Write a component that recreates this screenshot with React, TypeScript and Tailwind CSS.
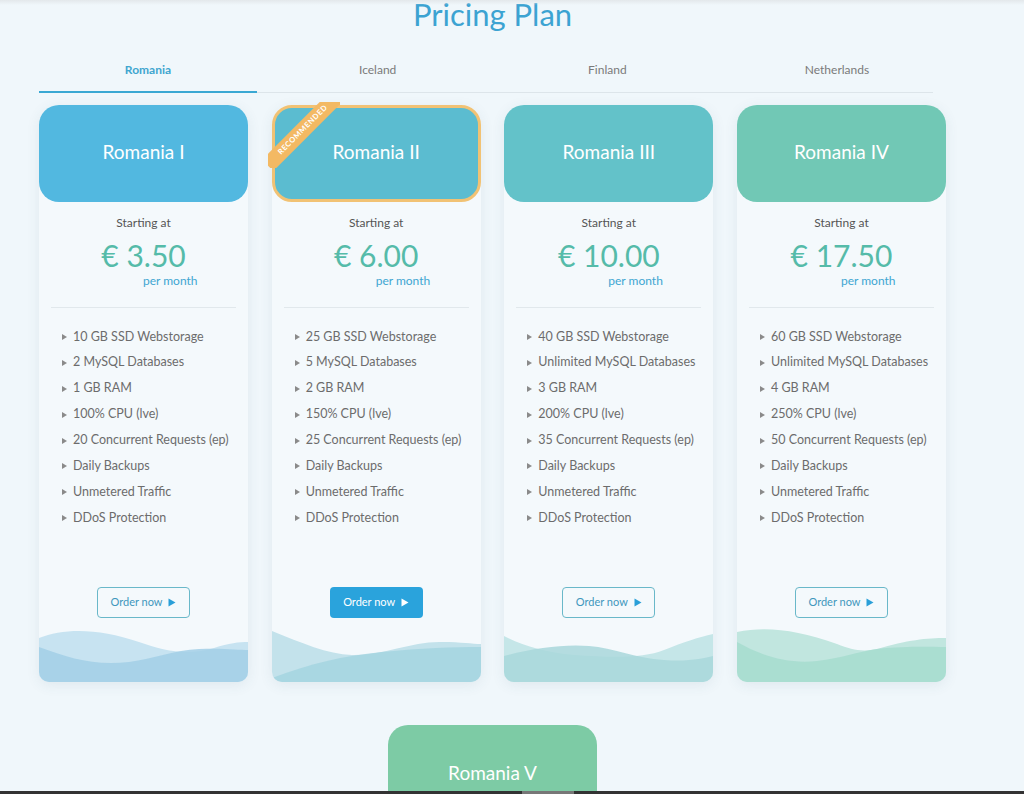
import React from "react";

type Plan = {
  name: string;
  price: string;
  features: string[];
  header: string;
  light: string;
  dark: string;
  a: string;
  b: string;
  featured?: boolean;
};

const plans: Plan[] = [
  {
    name: "Romania I",
    price: "3.50",
    features: [
      "10 GB SSD Webstorage",
      "2 MySQL Databases",
      "1 GB RAM",
      "100% CPU (lve)",
      "20 Concurrent Requests (ep)",
      "Daily Backups",
      "Unmetered Traffic",
      "DDoS Protection",
    ],
    header: "bg-[#52b8e0]",
    light: "#c7e3f1",
    dark: "#a2cfe6",
    a: "M0,10 C25,0 60,0 100,14 C125,23 150,28 175,20 C190,15 200,14 209,14 L209,54 L0,54 Z",
    b: "M0,19 C30,30 55,38 90,34 C115,31 135,22 160,21 C185,20 200,22 209,22 L209,54 L0,54 Z",
  },
  {
    name: "Romania II",
    price: "6.00",
    features: [
      "25 GB SSD Webstorage",
      "5 MySQL Databases",
      "2 GB RAM",
      "150% CPU (lve)",
      "25 Concurrent Requests (ep)",
      "Daily Backups",
      "Unmetered Traffic",
      "DDoS Protection",
    ],
    header: "bg-[#5bbcd0]",
    light: "#c3e2eb",
    dark: "#a5d5e0",
    a: "M0,3 C30,15 55,26 80,27 C110,28 140,13 170,14 C190,14 200,16 209,16 L209,54 L0,54 Z",
    b: "M0,50 C40,35 70,28 110,24 C150,20 180,19 209,19 L209,54 L0,54 Z",
    featured: true,
  },
  {
    name: "Romania III",
    price: "10.00",
    features: [
      "40 GB SSD Webstorage",
      "Unlimited MySQL Databases",
      "3 GB RAM",
      "200% CPU (lve)",
      "35 Concurrent Requests (ep)",
      "Daily Backups",
      "Unmetered Traffic",
      "DDoS Protection",
    ],
    header: "bg-[#63c2c9]",
    light: "#c5e6e8",
    dark: "#a8d7da",
    a: "M0,8 C20,18 40,24 70,27 C110,30 140,30 160,22 C180,14 195,9 209,6 L209,54 L0,54 Z",
    b: "M0,28 C30,20 60,16 85,18 C110,20 130,30 160,32 C185,34 200,30 209,28 L209,54 L0,54 Z",
  },
  {
    name: "Romania IV",
    price: "17.50",
    features: [
      "60 GB SSD Webstorage",
      "Unlimited MySQL Databases",
      "4 GB RAM",
      "250% CPU (lve)",
      "50 Concurrent Requests (ep)",
      "Daily Backups",
      "Unmetered Traffic",
      "DDoS Protection",
    ],
    header: "bg-[#71c8b5]",
    light: "#c1e6df",
    dark: "#a6dccf",
    a: "M0,4 C30,-2 60,2 100,16 C115,22 125,24 140,21 C170,12 190,10 209,10 L209,54 L0,54 Z",
    b: "M0,14 C25,28 50,36 80,33 C105,30 120,24 140,21 C170,18 190,19 209,19 L209,54 L0,54 Z",
  },
];

const tabs = ["Romania", "Iceland", "Finland", "Netherlands"];

function Play({ className }: { className: string }) {
  return (
    <svg width="8" height="9" viewBox="0 0 8 9" className={className}>
      <path d="M0.5 0.5 L7.5 4.5 L0.5 8.5 Z" fill="currentColor" />
    </svg>
  );
}

function Card({ p }: { p: Plan }) {
  return (
    <div className="relative flex h-[577px] w-[209px] flex-col rounded-b-[10px] rounded-t-[20px] bg-[#f4f9fc] shadow-[0_3px_14px_rgba(60,90,110,0.09)]">
      <div
        className={`flex h-[97px] items-center justify-center rounded-[20px] pb-[2px] ${p.header} ${
          p.featured ? "border-[3px] border-[#f1c274]" : ""
        }`}
      >
        <span className="text-[19px] text-white">{p.name}</span>
      </div>
      {p.featured && (
        <div className="pointer-events-none absolute left-[-4px] top-[-3px] h-[66px] w-[72px] overflow-hidden">
          <div className="absolute left-[-15px] top-[20px] flex h-[16px] w-[100px] -rotate-45 items-center justify-center bg-[#f3b963]">
            <span className="text-[7.5px] font-bold tracking-[0.6px] text-white">RECOMMENDED</span>
          </div>
        </div>
      )}
      <div className="pt-[13px] text-center text-[12px] leading-[16px] text-[#555]">Starting at</div>
      <div className="mt-[6px] text-center text-[30px] leading-[36px] text-[#55bba9]">€ {p.price}</div>
      <div className="pl-[104px] text-[12px] leading-[16px] text-[#3ea6d2]">per month</div>
      <div className="mx-[12px] mt-[18px] h-px bg-[#e1e8ec]" />
      <ul className="mt-[16px] flex flex-col">
        {p.features.map((f) => (
          <li key={f} className="flex h-[25.9px] items-center pl-[23px] text-[12.5px] text-[#6c6c6c]">
            <svg width="5" height="6" viewBox="0 0 5 6" className="mr-[6px]">
              <path d="M0 0 L5 3 L0 6 Z" fill="#8a8a8a" />
            </svg>
            {f}
          </li>
        ))}
      </ul>
      <div className="mt-auto flex justify-center">
        {p.featured ? (
          <button className="flex h-[31px] w-[93px] items-center justify-center gap-[6px] rounded-[4px] bg-[#2aa3dc] text-[11px] text-white">
            Order now <Play className="text-white" />
          </button>
        ) : (
          <button className="flex h-[31px] w-[93px] items-center justify-center gap-[6px] rounded-[4px] border border-[#69b8c9] text-[11px] text-[#3f97bd]">
            Order now <Play className="text-[#2a9fd8]" />
          </button>
        )}
      </div>
      <svg viewBox="0 0 209 54" width="209" height="54" className="mt-[10px] block rounded-b-[10px]" preserveAspectRatio="none">
        <path d={p.a} fill={p.light} />
        <path d={p.b} fill={p.dark} opacity="0.85" />
      </svg>
    </div>
  );
}

export default function App() {
  return (
    <div
      className="relative h-[794px] w-[1024px] overflow-hidden bg-[#f0f7fb]"
      style={{ fontFamily: "Lato, 'Open Sans', sans-serif" }}
    >
      <div className="absolute left-0 top-0 h-[5px] w-full bg-gradient-to-b from-[#e3e8eb] to-transparent" />
      <div className="ml-[39px] w-[907px]">
        <h1 className="mt-[-4px] text-center text-[31px] leading-[36px] text-[#3ca3d2]">Pricing Plan</h1>
        <div className="mt-[16px] w-[894px] border-b border-[#dde5ea]">
          <div className="grid w-[907px] grid-cols-4 gap-x-[11.67px]">
            {tabs.map((t, i) => (
              <div
                key={t}
                className={`-mb-px pb-[13px] pt-[14px] text-center text-[12px] leading-[16px] border-b-2 ${
                  i === 0 ? "border-[#3aa8d3] font-bold text-[#3fa6cf]" : "border-transparent text-[#7a7a7a]"
                }`}
              >
                {t}
              </div>
            ))}
          </div>
        </div>
        <div className="mt-[12px] flex justify-between">
          {plans.map((p) => (
            <Card key={p.name} p={p} />
          ))}
        </div>
        <div className="mt-[43px] flex justify-center">
          <div className="flex h-[97px] w-[209px] items-center justify-center rounded-[20px] bg-[#7dcba5]">
            <span className="text-[19px] text-white">Romania V</span>
          </div>
        </div>
      </div>
      <div className="absolute bottom-0 left-0 flex h-[3px] w-full bg-[#333]">
        <div className="ml-[522px] h-full w-[52px] bg-[#777]" />
      </div>
    </div>
  );
}
